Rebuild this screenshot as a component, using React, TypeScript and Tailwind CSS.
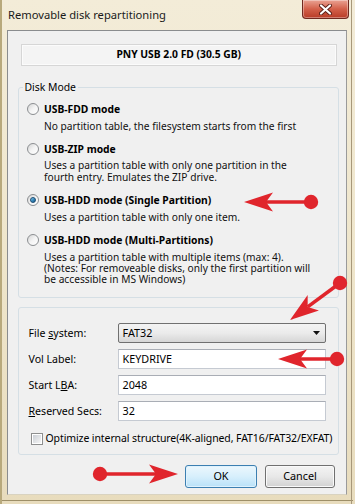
import React from 'react';

const font = { fontFamily: '"Noto Sans", "Open Sans", sans-serif' };

type Pt = [number, number];

function Arrow({ from, to }: { from: Pt; to: Pt }) {
  const dx = to[0] - from[0];
  const dy = to[1] - from[1];
  const len = Math.hypot(dx, dy);
  const ux = dx / len;
  const uy = dy / len;
  const nx = -uy;
  const ny = ux;
  const L = 29;
  const W = 9.5;
  const back: Pt = [to[0] - ux * L, to[1] - uy * L];
  const notch: Pt = [to[0] - ux * (L - 7), to[1] - uy * (L - 7)];
  const pts = [
    to,
    [back[0] + nx * W, back[1] + ny * W],
    notch,
    [back[0] - nx * W, back[1] - ny * W],
  ]
    .map((p) => p.join(','))
    .join(' ');
  return (
    <g>
      <line x1={from[0]} y1={from[1]} x2={notch[0]} y2={notch[1]} stroke="#e0252c" strokeWidth={3.6} />
      <polygon points={pts} fill="#e0252c" />
      <circle cx={from[0]} cy={from[1]} r={7.2} fill="#e0252c" />
    </g>
  );
}

function Radio({ checked }: { checked?: boolean }) {
  return (
    <span className="flex h-[12px] w-[12px] shrink-0 items-center justify-center rounded-full border border-[#8b8e91] bg-gradient-to-br from-[#d4d4d4] via-[#f4f4f4] to-white">
      {checked && (
        <span className="h-[6px] w-[6px] rounded-full border border-[#1b4b72] bg-gradient-to-br from-[#8ad0f0] via-[#3b8ec0] to-[#1a5c8c]" />
      )}
    </span>
  );
}

function Option({ title, lines, checked }: { title: string; lines: string[]; checked?: boolean }) {
  return (
    <div className="flex flex-col">
      <div className="flex h-[12px] items-center gap-[5px] pl-[8.5px]">
        <Radio checked={checked} />
        <span className="text-[10.3px] font-bold leading-[12px] text-black">{title}</span>
      </div>
      <div className="mt-[5.6px] pl-[25.5px] text-[10.2px] leading-[11.3px] text-[#111]">
        {lines.map((l) => (
          <div key={l} className="whitespace-nowrap">
            {l}
          </div>
        ))}
      </div>
    </div>
  );
}

function Field({ label, children }: { label: React.ReactNode; children: React.ReactNode }) {
  return (
    <div className="flex h-[20px] items-center">
      <div className="w-[89px] shrink-0 pt-[1px] text-[10.6px] text-black">{label}</div>
      {children}
    </div>
  );
}

function TextBox({ value }: { value: string }) {
  return (
    <div className="flex h-[20px] flex-1 items-center border border-[#c5cad2] border-t-[#a9adb5] bg-white pl-[4px] text-[10.8px] text-black">
      {value}
    </div>
  );
}

export default function App() {
  return (
    <div
      className="relative h-[504px] w-[355px] overflow-hidden bg-gradient-to-b from-[#f3ecd8] via-[#efe6cc] to-[#e8dcbd]"
      style={font}
    >
      <div className="flex h-[30px] items-start justify-between border-l-2 border-[#c9b98a] pl-[6px] pr-[6px]">
        <span className="pt-[7px] text-[11.2px] leading-[15px] text-[#1a1a1a]">Removable disk repartitioning</span>
        <div className="flex h-[19px] w-[47px] items-center justify-center rounded-b-[4px] border border-t-0 border-[#70291f] bg-gradient-to-b from-[#e9a293] via-[#d3604a] to-[#b83b26] shadow-[inset_0_0_0_1px_rgba(255,255,255,0.35)]">
          <svg width="13" height="11" viewBox="0 0 13 11">
            <path d="M2 1.5 L11 9.5 M11 1.5 L2 9.5" stroke="#5a1f17" strokeWidth="4" strokeLinecap="round" />
            <path d="M2 1.5 L11 9.5 M11 1.5 L2 9.5" stroke="#ffffff" strokeWidth="2.2" strokeLinecap="round" />
          </svg>
        </div>
      </div>

      <div className="mx-[7px] flex h-[465px] w-[340px] flex-col border border-[#8a8c8e] border-b-[#d9d3c0] border-r-[#9a9a9a] bg-[#f0f0f0] pt-[13px]">
        {/* device */}
        <div className="ml-[12.5px] mr-[9px] flex h-[22px] items-center justify-center border border-[#d6d6d6] bg-[#f4f4f4] shadow-[inset_0_0_0_1px_#fbfbfb] text-[10.3px] font-bold text-black">
          PNY USB 2.0 FD (30.5 GB)
        </div>

        {/* disk mode */}
        <fieldset className="ml-[9.5px] mr-[7.5px] mt-[15px] rounded-[3px] border border-[#d5dfe5] pb-[12px]">
          <legend className="ml-[4px] px-[2px] text-[10.4px] leading-[12px] text-black">Disk Mode</legend>
          <div className="flex flex-col gap-[11px] pt-[10px]">
            <Option title="USB-FDD mode" lines={['No partition table, the filesystem starts from the first']} />
            <Option
              title="USB-ZIP mode"
              lines={['Uses a partition table with only one partition in the', 'fourth entry. Emulates the ZIP drive.']}
            />
            <Option title="USB-HDD mode (Single Partition)" lines={['Uses a partition table with only one item.']} checked />
            <Option
              title="USB-HDD mode (Multi-Partitions)"
              lines={[
                'Uses a partition table with multiple items (max: 4).',
                '(Notes: For removeable disks, only the first partition will',
                'be accessible in MS Windows)',
              ]}
            />
          </div>
        </fieldset>

        {/* file system */}
        <div className="ml-[9.5px] mr-[7.5px] mt-[9px] flex flex-col rounded-[3px] border border-[#d5dfe5] pb-[9px] pl-[10px] pr-[12px] pt-[15px]">
          <div className="flex flex-col gap-[6px]">
            <Field
              label={
                <>
                  File <span className="underline">s</span>ystem:
                </>
              }
            >
              <div className="flex h-[20px] flex-1 items-center justify-between rounded-[2px] border border-[#707070] bg-gradient-to-b from-[#f3f3f3] via-[#ebebeb] to-[#d6d6d6] pl-[4px] pr-[5px] text-[10.8px] text-black">
                <span>FAT32</span>
                <svg width="7" height="4" viewBox="0 0 7 4">
                  <path d="M0 0 H7 L3.5 4 Z" fill="#111" />
                </svg>
              </div>
            </Field>
            <Field label="Vol Label:">
              <TextBox value="KEYDRIVE" />
            </Field>
            <Field
              label={
                <>
                  Start L<span className="underline">B</span>A:
                </>
              }
            >
              <TextBox value="2048" />
            </Field>
            <Field
              label={
                <>
                  <span className="underline">R</span>eserved Secs:
                </>
              }
            >
              <TextBox value="32" />
            </Field>
          </div>
          <div className="mt-[11.5px] flex h-[12px] items-center gap-[3px] pl-[2px]">
            <span className="flex h-[12px] w-[12px] shrink-0 items-center justify-center border border-[#8e8f8f] bg-white">
              <span className="h-[8px] w-[8px] bg-gradient-to-br from-[#cbcfd5] to-[#f6f6f6]" />
            </span>
            <span className="whitespace-nowrap text-[10.5px] tracking-[-0.1px] text-black">
              Optimize internal structure(4K-aligned, FAT16/FAT32/EXFAT)
            </span>
          </div>
        </div>

        {/* buttons */}
        <div className="mr-[11px] mt-[10px] flex justify-end gap-[8px]">
          <button className="flex h-[23px] w-[72px] items-center justify-center rounded-[3px] border border-[#3c7fb1] bg-gradient-to-b from-[#ecf7fd] via-[#d7effc] to-[#b9e1f8] shadow-[inset_0_0_0_1px_#dff2fd] text-[10.8px] text-black">
            OK
          </button>
          <button className="flex h-[23px] w-[70px] items-center justify-center rounded-[3px] border border-[#707070] bg-gradient-to-b from-[#f4f4f4] via-[#e8e8e8] to-[#d2d2d2] shadow-[inset_0_0_0_1px_#fafafa] text-[10.8px] text-black">
            Cancel
          </button>
        </div>
      </div>

      <div className="mx-[2px] mt-[5px] h-[1px] bg-[#9e8f68]" />

      <div className="pointer-events-none absolute inset-y-0 left-0 w-[2px] bg-[#b8a97c]" />
      <div className="pointer-events-none absolute inset-y-0 right-[3px] w-[1px] bg-[#a7987a]" />

      <svg className="pointer-events-none absolute left-0 top-0" width="355" height="504">
        <Arrow from={[311, 202]} to={[244, 202]} />
        <Arrow from={[340, 283]} to={[290, 320]} />
        <Arrow from={[337, 359]} to={[278, 359]} />
        <Arrow from={[100, 474]} to={[178, 474]} />
      </svg>
    </div>
  );
}
